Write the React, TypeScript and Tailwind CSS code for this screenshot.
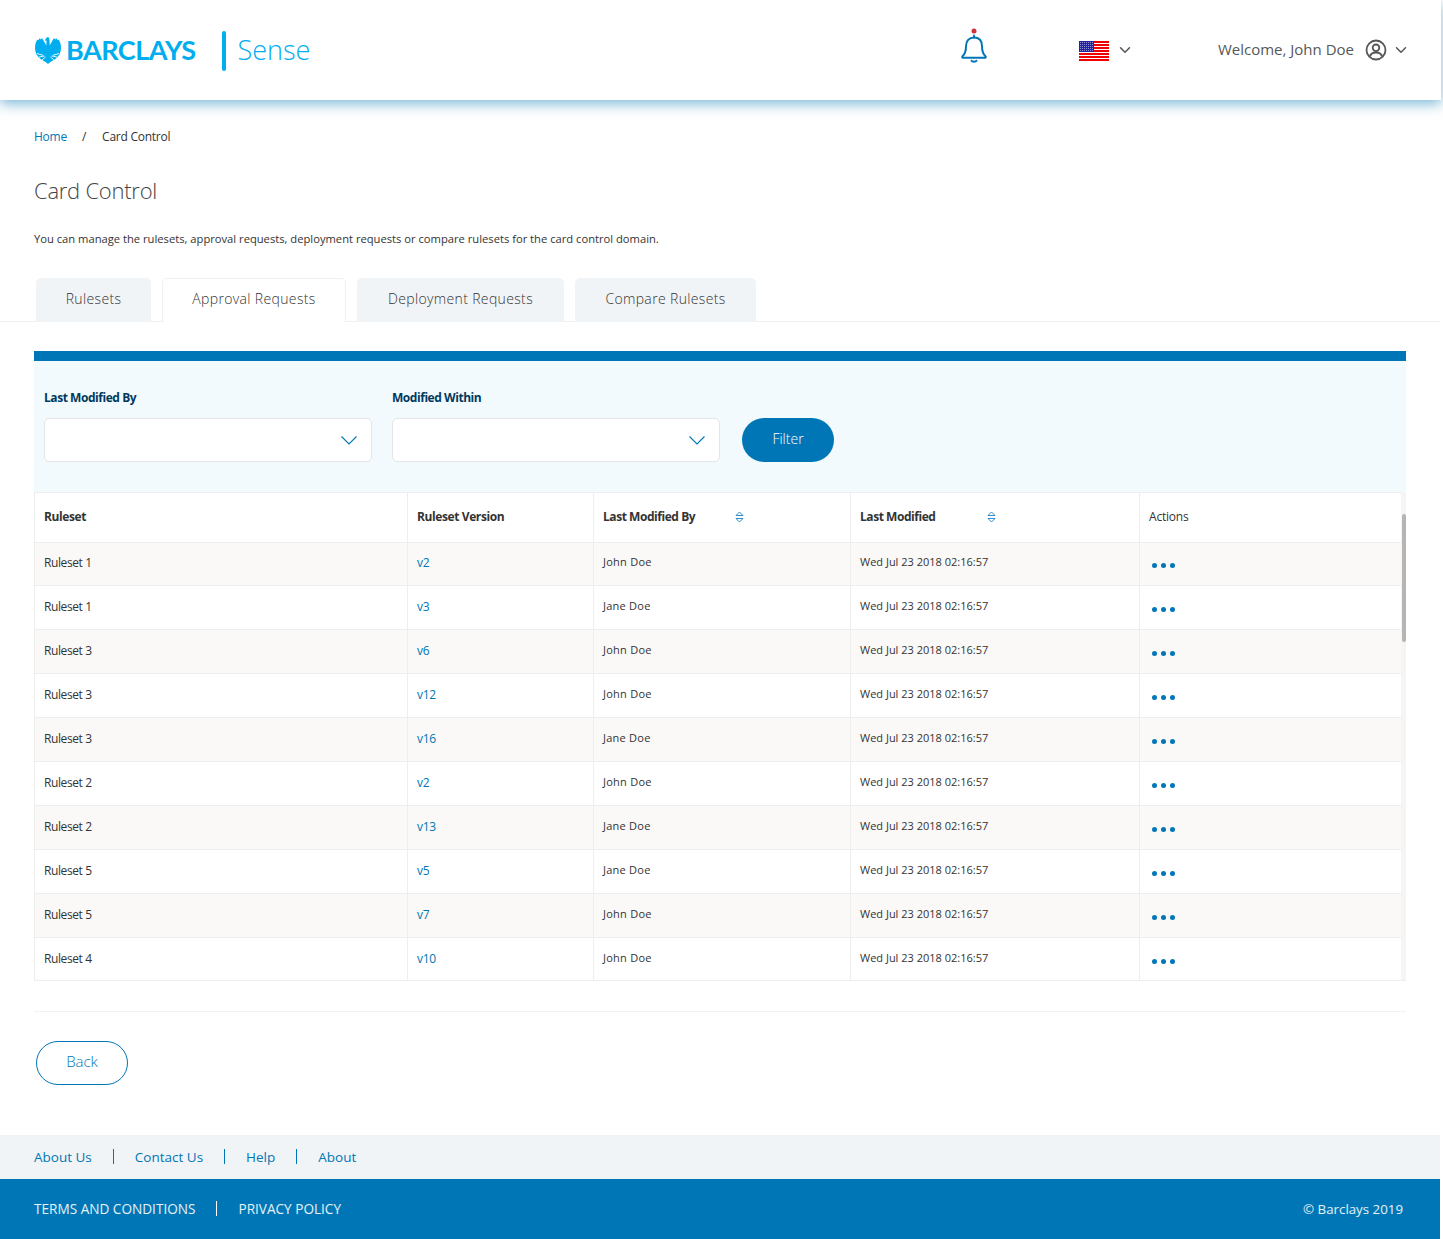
import React from "react";
import { ChevronDown } from "lucide-react";

const rows = [
  ["Ruleset 1", "v2", "John Doe"],
  ["Ruleset 1", "v3", "Jane Doe"],
  ["Ruleset 3", "v6", "John Doe"],
  ["Ruleset 3", "v12", "John Doe"],
  ["Ruleset 3", "v16", "Jane Doe"],
  ["Ruleset 2", "v2", "John Doe"],
  ["Ruleset 2", "v13", "Jane Doe"],
  ["Ruleset 5", "v5", "Jane Doe"],
  ["Ruleset 5", "v7", "John Doe"],
  ["Ruleset 4", "v10", "John Doe"],
];

const Eagle = () => (
  <svg width="26" height="27" viewBox="0 0 26 27" fill="#00aeef" className="ml-[1px]">
    <path d="M13 0C13.900 .4 14.400 1.400 14.500 3L14.700 8.500C16 6 17.500 3.500 19 1L20 2.500L21.500 1.200L22.500 3L23.800 2.800C25.300 5 26 8 26 11C26 15.500 24 19.500 20.500 22L17.500 23.700C16 24.500 14.300 25.500 13 27C11.700 25.500 10 24.500 8.500 23.700L5.500 22C2 19.500 0 15.500 0 11C0 8 .7 5 2.200 2.800L3.500 3L4.500 1.200L6 2.500L7 1C8.500 3.500 10 6 11.300 8.500L11.500 3.800L10 3.500C10.200 2 11.300 .6 13 0Z" />
    <path d="M2 16.500l6 1.800M4 20l5.500-1M7 23l3.500-3M24 16.500l-6 1.800M22 20l-5.500-1M19 23l-3.500-3" stroke="#fff" strokeWidth=".9" fill="none" />
  </svg>
);

const Bell = () => (
  <svg width="26" height="36" viewBox="0 0 26 36" fill="none" stroke="#0076b6" strokeWidth="2" strokeLinecap="round" strokeLinejoin="round" className="mb-[8px]">
    <circle cx="13" cy="3" r="2.500" fill="#d0343a" stroke="none" />
    <path d="M13 7.500v2" />
    <path d="M1.500 28.300c2.700-2.500 3.500-5 3.500-10 0-5.500 3-8.800 8-8.800s8 3.300 8 8.800c0 5 .8 7.500 3.500 10 .6.800 0 1.500-.8 1.500H2.300c-.8 0-1.400-.7-.8-1.500z" />
    <path d="M10.500 32.800c.6 1.200 4.400 1.200 5 0" />
  </svg>
);

const Flag = () => (
  <svg width="30" height="20" viewBox="0 0 30 20" shapeRendering="crispEdges" className="mt-[1px]">
    <rect width="30" height="20" fill="#fff" />
    {[0, 3, 6, 9, 12, 15, 18].map((y) => (
      <rect key={y} y={y} width="30" height="1.500" fill="#f00000" />
    ))}
    <rect y="18" width="30" height="2" fill="#f00000" />
    <rect width="15" height="10.500" fill="#23239c" />
    {[1, 3, 5, 7, 9].map((y) =>
      [1, 3, 5, 7, 9, 11, 13].map((x) => <rect key={x + "-" + y} x={x} y={y} width="1" height="1" fill="#8f8fd6" />)
    )}
  </svg>
);

const SortIcon = () => (
  <svg width="9" height="12" viewBox="0 0 9 12" fill="none" stroke="#2f8fcb" strokeWidth="1" className="ml-[5px]">
    <path d="M1 4.500L4.500 1 8 4.500zM1 7.500L4.500 11 8 7.500z" />
  </svg>
);

const Select = ({ label }: { label: string }) => (
  <div className="w-[328px]">
    <div className="text-[12px] leading-[16px] font-bold text-[#00395d] mt-[1px] mb-[12px] tracking-[-0.45px]">{label}</div>
    <div className="h-[44px] bg-white border border-[#e3e6e8] rounded-[5px] flex items-center justify-end pr-[14px]">
      <svg width="16" height="9" viewBox="0 0 16 9" fill="none" stroke="#0076b6" strokeWidth="1.100">
        <path d="M.5.500L8 8 15.500.500" />
      </svg>
    </div>
  </div>
);

const Tab = ({ label, w, active }: { label: string; w: string; active?: boolean }) => (
  <div
    className={
      "h-[44px] rounded-t-[5px] flex items-center justify-center text-[14px] font-light tracking-[0.35px] text-[#333] -mb-px pb-[4px] " +
      w +
      (active ? " bg-white border border-b-0 border-[#f0f0f0]" : " bg-[#f1f4f7]")
    }
  >
    {label}
  </div>
);

export default function App() {
  return (
    <div className="w-[1440px] min-h-[1239px] bg-white text-[#333] font-['Open_Sans',sans-serif] flex flex-col">
      <header className="h-[100px] w-[1441px] shrink-0 bg-white flex items-center pl-[34px] pr-[31px] shadow-[0_4px_12px_rgba(0,118,182,0.5)] relative">
        <Eagle />
        <span className="ml-[5px] mt-[1px] text-[27px] font-bold text-[#00aeef] font-['Lato',sans-serif] tracking-[-0.5px]">BARCLAYS</span>
        <div className="w-[4px] h-[40px] rounded-full bg-[#00aeef] ml-[26px] mt-[1px]" />
        <span className="ml-[12px] text-[27px] font-light text-[#00aeef]">Sense</span>
        <div className="ml-auto flex items-center">
          <Bell />
          <div className="ml-[92px] flex"><Flag /></div>
          <ChevronDown size={18} strokeWidth={2} className="ml-[7px] text-[#555]" />
          <span className="ml-[84px] mb-[2px] text-[15px] text-[#575757]">Welcome, John Doe</span>
          <svg width="22" height="22" viewBox="0 0 22 22" fill="none" stroke="#575757" strokeWidth="1.800" className="ml-[11px]">
            <circle cx="11" cy="11" r="9.500" />
            <circle cx="11" cy="8.800" r="3.300" />
            <path d="M4.800 17.500c1-3 3.500-4 6.200-4s5.200 1 6.200 4" />
          </svg>
          <ChevronDown size={18} strokeWidth={2} className="ml-[5px] text-[#555]" />
        </div>
      </header>

      <div className="px-[34px] pt-[29px] flex items-center text-[12px] leading-[16px] tracking-[-0.25px]">
        <span className="text-[#0076b6]">Home</span>
        <span className="ml-[15px] text-[#333]">/</span>
        <span className="ml-[16px] text-[#333]">Card Control</span>
      </div>
      <h1 className="px-[34px] mt-[30px] text-[22px] leading-[30px] font-light text-[#444] tracking-[-0.25px]">Card Control</h1>
      <p className="px-[34px] mt-[26px] text-[11.200px] leading-[16px] text-[#333]">
        You can manage the rulesets, approval requests, deployment requests or compare rulesets for the card control domain.
      </p>

      <div className="mt-[31px] pl-[36px] flex gap-[11px] border-b border-[#f0f0f0] h-[44px] shrink-0">
        <Tab label="Rulesets" w="w-[115px]" />
        <Tab label="Approval Requests" w="w-[184px]" active />
        <Tab label="Deployment Requests" w="w-[207px]" />
        <Tab label="Compare Rulesets" w="w-[181px]" />
      </div>

      <section className="mx-[34px] mt-[29px] w-[1372px]">
        <div className="h-[10px] bg-[#0076b6]" />
        <div className="h-[131px] bg-[#f2fafe] pl-[10px] pt-[28px] flex gap-[20px]">
          <Select label="Last Modified By" />
          <Select label="Modified Within" />
          <button className="self-end mb-[30px] ml-[2px] w-[92px] h-[44px] pb-[4px] rounded-full bg-[#0076b6] text-[14px] font-light text-white">Filter</button>
        </div>

        <div className="relative border-l border-b border-[#eee] pr-[5px]">
          <table className="w-full table-fixed border-collapse text-[11px] text-[#333]">
            <colgroup>
              <col className="w-[372px]" />
              <col className="w-[186px]" />
              <col className="w-[257px]" />
              <col className="w-[289px]" />
              <col />
            </colgroup>
            <thead>
              <tr className="h-[50px] border-t border-b border-[#eee] text-left text-[12px]">
                <th className="pl-[9px] pb-[2px] font-bold tracking-[-0.4px]">Ruleset</th>
                <th className="pl-[9.500px] pb-[2px] font-bold tracking-[-0.4px] border-l border-[#eee]">Ruleset Version</th>
                <th className="pl-[9.500px] pb-[2px] font-bold tracking-[-0.45px] border-l border-[#eee]">
                  <div className="flex items-center">Last Modified By<span className="ml-[35px]"><SortIcon /></span></div>
                </th>
                <th className="pl-[9.500px] pb-[2px] font-bold tracking-[-0.45px] border-l border-[#eee]">
                  <div className="flex items-center">Last Modified<span className="ml-[47px]"><SortIcon /></span></div>
                </th>
                <th className="pl-[9.500px] pb-[2px] font-normal tracking-[-0.2px] border-l border-[#eee]">Actions</th>
              </tr>
            </thead>
            <tbody>
              {rows.map((r, i) => (
                <tr
                  key={i}
                  className={
                    (i === 0 ? "h-[43px] " : i === rows.length - 1 ? "h-[42px] [&>td]:pt-[2px] " : "h-[44px] ") +
                    (i === rows.length - 1 ? "" : "border-b border-[#eee] ") +
                    (i % 2 === 0 ? "bg-[#faf9f7]" : "bg-white")
                  }
                >
                  <td className="pl-[9px] pb-[2px] text-[12px] tracking-[-0.4px]">{r[0]}</td>
                  <td className="pl-[9.500px] pb-[2px] border-l border-[#eee] text-[12px] tracking-[-0.3px] text-[#0076b6]">{r[1]}</td>
                  <td className="pl-[9.500px] pb-[3px] border-l border-[#eee] tracking-[0.25px]">{r[2]}</td>
                  <td className="pl-[9.500px] pb-[3px] border-l border-[#eee]">Wed Jul 23 2018 02:16:57</td>
                  <td className="pl-[12px] border-l border-[#eee]">
                    <div className="flex gap-[4px] mt-[3px]">
                      <i className="w-[5px] h-[5px] rounded-full bg-[#0076b6]" />
                      <i className="w-[5px] h-[5px] rounded-full bg-[#0076b6]" />
                      <i className="w-[5px] h-[5px] rounded-full bg-[#0076b6]" />
                    </div>
                  </td>
                </tr>
              ))}
            </tbody>
          </table>
          <div className="absolute right-0 top-0 bottom-0 w-[5px] bg-[#f5f5f5]">
            <div className="mt-[22px] ml-auto w-[4px] h-[128px] bg-[#b5b5b5] rounded-full" />
          </div>
        </div>
      </section>

      <div className="mx-[34px] mt-[30px] w-[1372px] border-t border-[#f2f2f2]" />
      <button className="ml-[36px] mt-[29px] w-[92px] h-[44px] pb-[2px] rounded-full border border-[#0076b6] text-[15px] font-light text-[#0076b6]">Back</button>

      <div className="mt-[50px] h-[44px] bg-[#f1f4f7] flex items-center pl-[34px] text-[13.500px] text-[#0076b6]">
        <span className="mt-[2px]">About Us</span>
        <span className="w-px h-[15px] bg-[#0076b6] mx-[21px]" />
        <span className="mt-[2px]">Contact Us</span>
        <span className="w-px h-[15px] bg-[#0076b6] mx-[21px]" />
        <span className="mt-[2px]">Help</span>
        <span className="w-px h-[15px] bg-[#0076b6] mx-[21px]" />
        <span className="mt-[2px]">About</span>
      </div>
      <footer className="h-[60px] bg-[#0076b6] flex items-center px-[34px] text-[13.600px] text-white/90">
        <span className="mt-[2px]">TERMS AND CONDITIONS</span>
        <span className="w-px h-[15px] bg-white mx-[21px]" />
        <span className="mt-[2px]">PRIVACY POLICY</span>
        <span className="ml-auto mr-[3px] mt-[2px] text-[13.300px]">© Barclays 2019</span>
      </footer>
    </div>
  );
}
